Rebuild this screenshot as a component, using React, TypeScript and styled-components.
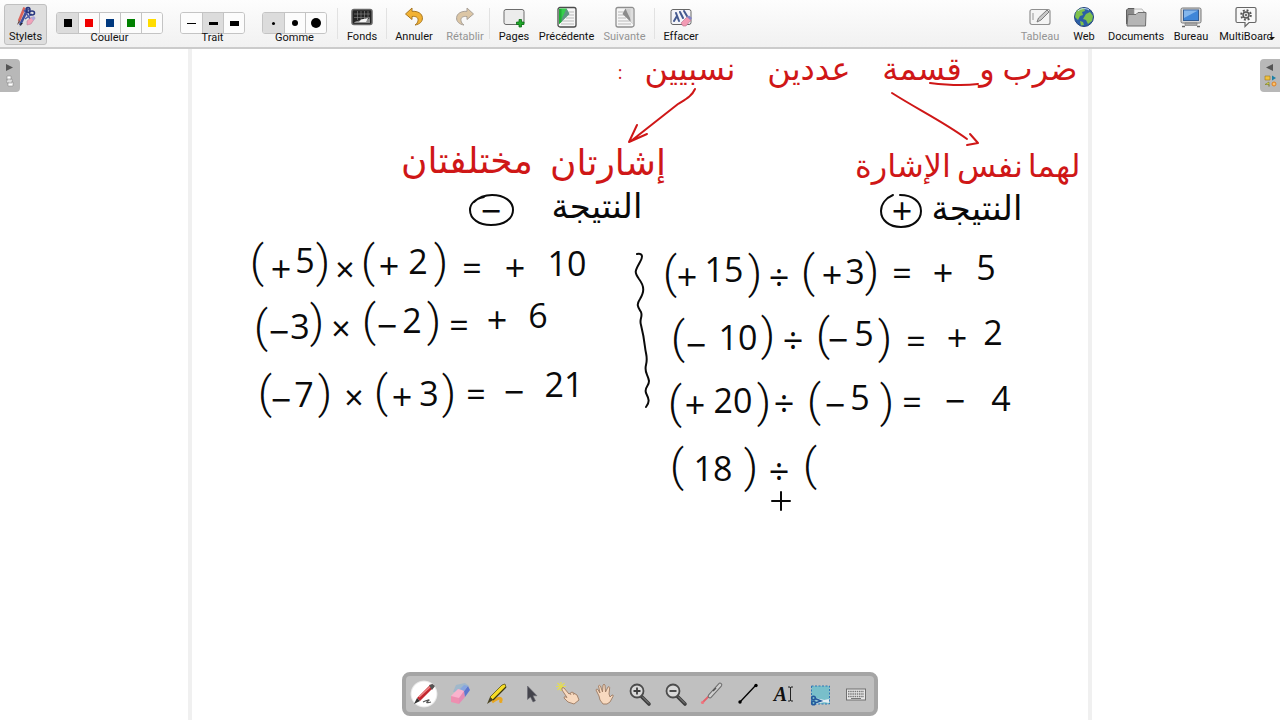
import React from "react";
import styled, { createGlobalStyle, css } from "styled-components";

const GlobalStyle = createGlobalStyle`
  *, *::before, *::after { box-sizing: border-box; }
  body {
    margin: 0;
    background: #fff;
    color: #111;
    font-family: Roboto, "Noto Sans", sans-serif;
    overflow: hidden;
  }
  button { font: inherit; color: inherit; }
`;

const Window = styled.div`
  display: flex;
  flex-direction: column;
  min-height: 100vh;
`;

/* ---------- top toolbar ---------- */

const Toolbar = styled.header`
  display: flex;
  align-items: stretch;
  height: 49px;
  padding: 4px 4px 2px;
  border-bottom: 2px solid #cbcbcb;
  background: linear-gradient(#fdfdfd, #f1f1f1);
  font-size: 11px;
  line-height: 14px;
`;

const Spacer = styled.div`
  flex: 1;
`;

const Divider = styled.span<{ $gap?: number }>`
  width: 1px;
  margin: 4px 0 6px ${(p) => p.$gap ?? 0}px;
  background: #e2e2e2;
`;

const ToolButton = styled.button<{ $width: number; $active?: boolean }>`
  position: relative;
  display: flex;
  flex-direction: column;
  align-items: center;
  gap: 2px;
  width: ${(p) => p.$width}px;
  height: 41px;
  padding: 1px 0 0;
  border: 1px solid transparent;
  border-radius: 3px;
  background: none;
  white-space: nowrap;
  ${(p) =>
    p.$active &&
    css`
      border-color: #c0c0c0;
      background: #dedede;
    `}
  &:disabled {
    color: #949494;
  }
  svg {
    display: block;
    flex: none;
  }
`;

const Group = styled.div`
  display: flex;
  flex-direction: column;
  align-items: center;
  margin-left: 9px;
  padding-top: 8px;
  & + & {
    margin-left: 17px;
  }
`;

const GroupLabel = styled.span`
  line-height: 8px;
`;

const Segments = styled.div`
  display: flex;
  border: 1px solid #c4c4c4;
  border-radius: 3px;
  overflow: hidden;
`;

const Segment = styled.button<{ $active?: boolean }>`
  display: grid;
  place-items: center;
  width: 21px;
  height: 20px;
  padding: 0;
  border: 0;
  background: ${(p) => (p.$active ? "#dcdcdc" : "#fcfcfc")};
  & + & {
    border-left: 1px solid #c4c4c4;
  }
`;

const Swatch = styled.i<{ $w: number; $h: number; $color?: string; $round?: boolean }>`
  width: ${(p) => p.$w}px;
  height: ${(p) => p.$h}px;
  background: ${(p) => p.$color ?? "#000"};
  border-radius: ${(p) => (p.$round ? "50%" : "0")};
`;

const Caret = styled.span`
  position: absolute;
  right: 0;
  bottom: 4px;
  border: 3px solid transparent;
  border-top-color: #111;
  border-bottom: 0;
`;

/* ---------- board ---------- */

const Board = styled.main`
  position: relative;
  display: flex;
  flex: 1;
  justify-content: center;
`;

const Sheet = styled.section`
  position: relative;
  width: 100%;
  max-width: 904px;
  border: solid #f0f0f0;
  border-width: 0 4px;
`;

const Drawing = styled.svg`
  position: absolute;
  inset: 0;
  width: 100%;
  height: 100%;
  fill: none;
  stroke: #0a0a0a;
  stroke-width: 2;
  stroke-linecap: round;
  stroke-linejoin: round;
`;

const Line = styled.p`
  margin: 0;
`;

const Ink = styled.span<{ $x: number; $y: number; $size: number; $paren?: boolean; $color?: string }>`
  position: absolute;
  left: ${(p) => p.$x}px;
  top: ${(p) => p.$y}px;
  transform: translate(-50%, -50%);
  font-family: ${(p) => (p.$paren ? "Roboto, sans-serif" : '"Open Sans", "DejaVu Sans", sans-serif')};
  font-size: ${(p) => p.$size}px;
  font-weight: ${(p) => (p.$paren ? 300 : 400)};
  line-height: 1;
  white-space: nowrap;
  color: ${(p) => p.$color ?? "#0a0a0a"};
`;

const SideTab = styled.button<{ $side: "left" | "right" }>`
  position: absolute;
  top: 10px;
  ${(p) => p.$side}: 0;
  display: grid;
  place-items: center;
  width: 20px;
  height: 33px;
  padding: 0;
  border: 0;
  border-radius: ${(p) => (p.$side === "left" ? "0 4px 4px 0" : "4px 0 0 4px")};
  background: #b8b8b8;
`;

/* ---------- floating palette ---------- */

const Palette = styled.nav`
  position: fixed;
  bottom: 4px;
  left: 50%;
  transform: translateX(-50%);
  display: flex;
  align-items: center;
  padding: 4px 0;
  border: 4px solid #a5a5a5;
  border-radius: 8px;
  background: #c0c0c0;
`;

const PaletteButton = styled.button<{ $active?: boolean }>`
  display: grid;
  place-items: center;
  width: 28px;
  height: 28px;
  margin: 0 4px;
  padding: 0;
  border: 0;
  border-radius: 50%;
  background: ${(p) => (p.$active ? "radial-gradient(circle, #fff 0 60%, #e4e4e4 66%, #c0c0c0 70%)" : "none")};
`;

const Icon = ({ w = 22, h = 22, children }: { w?: number; h?: number; children: React.ReactNode }) => (
  <svg width={w} height={h} viewBox={`0 0 ${w} ${h}`} fill="none" aria-hidden="true">
    {children}
  </svg>
);

/* ---------- toolbar icons ---------- */

const PensIcon = () => (
  <Icon>
    <path d="M13 2.500 5 19" stroke="#3c4f9a" strokeWidth="2.600" />
    <path d="M9.500 1.500 4 15" stroke="#d9635a" strokeWidth="2.600" />
    <path d="m4 14-2 5 3-3z" fill="#5b3a3a" />
    <path d="m6 17-1.500 3.500L8 17z" fill="#222" />
    <path d="m9 4 7 10M17 8l-7 5" stroke="#4c5aa8" strokeWidth="1.500" />
    <ellipse cx="13" cy="4" rx="2" ry="2.500" stroke="#26347e" strokeWidth="1.500" />
    <ellipse cx="17" cy="7" rx="2.500" ry="2" stroke="#26347e" strokeWidth="1.500" />
    <path d="m12 15 5-4 3 1-4 6-4 1z" fill="#f1a3b9" stroke="#b7849c" strokeWidth=".6" />
    <path d="m16 12 3-2 1.500 2-2 2.500z" fill="#a9a6dc" />
  </Icon>
);
const BackgroundsIcon = () => (
  <Icon>
    <rect x="1" y="3.500" width="20" height="15" rx="2" fill="#232323" stroke="#686868" strokeWidth="1.500" />
    <path d="M3 8h16M3 11.500h16M6.500 5v9M10 5v9M13.500 5v9M17 5v9" stroke="#8a8a8a" strokeWidth=".6" />
    <path d="M3 17c1-2 5-2.500 8-2.500 4 0 6-1 8-2.500v5z" fill="#8f8f8f" />
    <path d="m10 13.500 7-1.500-2 4H8z" fill="#f4f4f4" />
  </Icon>
);
const arrowPath = "M9 2 2.500 8 9 13.500V10.500c4-.5 6.500 1 6 4-.2 2-1.500 3.500-3 4.500 5-.8 7.700-3.500 7.400-7.400C19 7.500 15 5 9 5.300z";
const UndoIcon = () => (
  <Icon>
    <path d={arrowPath} fill="#f2b233" stroke="#a87722" strokeWidth="1" strokeLinejoin="round" />
  </Icon>
);
const RedoIcon = () => (
  <Icon>
    <g transform="translate(22 0) scale(-1 1)">
      <path d={arrowPath} fill="#dcc6a5" stroke="#a9a198" strokeWidth="1" strokeLinejoin="round" />
    </g>
  </Icon>
);
const PagesIcon = () => (
  <Icon>
    <rect x="1" y="3.500" width="20" height="15" rx="2" fill="#ececec" stroke="#6c6c6c" />
    <path d="M16 13.500h2.500v2.500H21v2.500h-2.500V21H16v-2.500h-2.500V16H16z" fill="#21a82a" stroke="#0b6b14" strokeWidth=".8" />
  </Icon>
);
const PageTurnIcon = ({ muted }: { muted?: boolean }) => (
  <Icon>
    <g transform={muted ? "translate(22 0) scale(-1 1)" : undefined}>
      <rect x="2" y="1.500" width="18" height="19.500" rx="2" fill="#f6f6f6" stroke={muted ? "#8f8f8f" : "#4b4b4b"} strokeWidth="1.300" />
      <path d="M12 6h6M12 9h6M10 12h8M5 15h13M5 18h13" stroke="#b9b9b9" />
      <path d="M3 2.500h7.500L13 8 3 18z" fill={muted ? "#cfcfcf" : "#35cf4c"} />
      <path d="M10.500 2.500 13.500 8 3 18 8.500 7z" fill={muted ? "#8b8b8b" : "#5f9482"} />
      <path d="M3 3h2.500v13L3 18z" fill={muted ? "#dedede" : "#1fae36"} />
    </g>
  </Icon>
);
const EraseIcon = () => (
  <Icon>
    <rect x="1" y="3.500" width="20" height="15" rx="2" fill="#f4f4f8" stroke="#666" />
    <path d="m4 15 3-5M6 7l3 8M10 6l3 6M14 5l3 5" stroke="#44598f" strokeWidth="2" strokeLinecap="round" />
    <path d="m11 17 6-6 4 3-5 6h-3z" fill="#f29bb4" stroke="#b8718b" strokeWidth=".6" />
    <path d="m17 11 2-1.500 3 2.500-1.500 2z" fill="#8585c7" />
  </Icon>
);
const BoardIcon = () => (
  <Icon>
    <rect x="1" y="3.500" width="20" height="15" rx="2" fill="#f4f4f4" stroke="#909090" strokeWidth="1.200" />
    <path d="M4 7v7" stroke="#a5a5a5" strokeWidth="1.200" />
    <path d="m8 16 1.500-4L18 4l2 2-8 8z" fill="#c8c8c8" stroke="#7c7c7c" />
  </Icon>
);
const WebIcon = () => (
  <Icon>
    <circle cx="11" cy="11" r="9.500" fill="#2c5fa7" stroke="#24457d" />
    <path d="M3 6c2-3 5-4 8-4l1 3-3 1 1 3-3 1-2 4-3-3zM13 8l4-2 3 4-1 5-4 3-2-4-3-1zM7 15l3 1 1 3-3 .5z" fill="#7fc24b" />
    <path d="M5 5c3-3 8-3 11-1" stroke="#c0d8f4" strokeWidth="1" />
  </Icon>
);
const DocumentsIcon = () => (
  <Icon>
    <path d="M1.500 18V4L3 2.500h6l2 3h8V18z" fill="#8a8a8a" stroke="#5e5e5e" />
    <path d="M9 3h8l2 3v5H9z" fill="#f1f1f1" stroke="#999" strokeWidth=".6" />
    <path d="M2 20 3 8.500h8l2-2h8L20.500 20z" fill="#b5b5b5" stroke="#6e6e6e" />
  </Icon>
);
const DesktopIcon = () => (
  <Icon>
    <rect x="1" y="2" width="20" height="15" rx="1.500" fill="#d5d5d5" stroke="#777" />
    <rect x="3.500" y="4" width="15" height="10.500" fill="#3f86d8" stroke="#345d93" />
    <path d="M4 4.500h14L4 12z" fill="#83b6ec" />
    <path d="M5 17h12v2.500H5z" fill="#aaa" stroke="#777" strokeWidth=".6" />
    <path d="M2 20.500h3M17 20.500h3" stroke="#666" strokeWidth="1.500" />
  </Icon>
);
const MultiBoardIcon = () => (
  <Icon>
    <path d="M2.500 1.500h17q1.500 0 1.500 1.500v12q0 1.500-1.500 1.500h-5.500l-4 4v-4H2.500Q1 16.500 1 15V3q0-1.500 1.500-1.500z" fill="#f8f8f8" stroke="#666" strokeWidth="1.200" />
    <circle cx="11" cy="9" r="4.800" stroke="#555" strokeWidth="2" strokeDasharray="1.900 1.870" />
    <circle cx="11" cy="9" r="3" fill="#ddd" stroke="#555" strokeWidth="1.400" />
    <circle cx="11" cy="9" r="1" fill="#555" />
  </Icon>
);

/* ---------- palette icons ---------- */

const PenIcon = () => (
  <Icon w={26} h={26}>
    <path d="M12 21c4-2 8-3 5-1s0 2 3 1" stroke="#555" strokeWidth="1.200" />
    <path d="m6 17 3 3L23 6l-1.500-2.500L19 4z" fill="#c3272f" />
    <path d="M8 16 20 5" stroke="#ef8a8a" strokeWidth="1.400" />
    <path d="m18 4 3.500-1L24 5l-3 4z" fill="#555" />
    <path d="m6 17 3 3-6 3z" fill="#333" />
  </Icon>
);
const EraserIcon = () => (
  <Icon w={26} h={26}>
    <path d="m9 4 9-2 4 3-7 5-9 1z" fill="#7fb0d6" opacity=".5" />
    <path d="m4 15 7-7 8 2-7 10-8 1z" fill="#f9b3cd" />
    <path d="m4 15 8 2v6l-8-2z" fill="#ee8fb0" />
    <path d="m12 17 5-7 1 6-6 7z" fill="#e58bb4" />
    <path d="m17 10 4-5 2 4-5 7z" fill="#5c76cf" />
    <path d="m13 8 4-4 4 1-4 5z" fill="#86a5e0" />
  </Icon>
);
const MarkerIcon = () => (
  <Icon w={26} h={26}>
    <path d="M9 21c4-3 8-5 9-3s-2 3 1 2" stroke="#e9a721" strokeWidth="3" />
    <path d="m7 16 3 3L23 6l-1-3-3 1z" fill="#f6dc26" stroke="#5b5313" strokeWidth=".8" />
    <path d="m10 19 13-13" stroke="#3a3610" strokeWidth="1.300" />
    <path d="m7 16 3 3-6 4z" fill="#4b4422" />
  </Icon>
);
const PointerIcon = () => (
  <Icon w={26} h={26}>
    <path d="M8.500 5v13.500l3-2.500 2.500 5 2.500-1.200-2.500-5h4z" fill="#44444c" stroke="#6c6c74" strokeWidth=".6" />
  </Icon>
);
const TouchIcon = () => (
  <Icon w={26} h={26}>
    <path d="M6 1v9M1 5.500h10M2.500 2l7 7M9.500 2l-7 7" stroke="#e3dc55" strokeWidth="1.200" />
    <path d="M7 7q1-1 2 0l5 6 3-2 5 3 2 5-5 4-6-2-4-4q0-2 2-1l1 .5L7 9z" fill="#f7d9bf" stroke="#9c7b62" strokeWidth=".9" />
    <path d="m15 12 1 2M18 12l1 2" stroke="#9c7b62" strokeWidth=".8" />
  </Icon>
);
const HandIcon = () => (
  <Icon w={26} h={26}>
    <path d="M8 15 5 9q.3-1.500 1.800-.6L9 12 7.500 5q.8-1.800 2 0l2 6L12 4q1-1.500 2 0l.5 7L17 6q1.300-1 1.700.6L18 13l1 3 2-2q1.800-.5 1 1.500L19 21l-3 2h-4l-3-4z" fill="#f7d9bf" stroke="#9c7b62" strokeWidth=".9" strokeLinejoin="round" />
  </Icon>
);
const MagnifierIcon = ({ plus }: { plus?: boolean }) => (
  <Icon w={26} h={26}>
    <path d="m14 15 8 8" stroke="#3e3e3e" strokeWidth="3.600" strokeLinecap="round" />
    <path d="m15 15.500 7 7" stroke="#8d8d8d" strokeWidth="1" />
    <circle cx="10" cy="10" r="6.500" fill="#d9d9d9" stroke="#4c4c4c" strokeWidth="1.800" />
    <path d={plus ? "M6.500 10h7M10 6.500v7" : "M6.500 10h7"} stroke="#3e3e3e" strokeWidth="1.800" />
  </Icon>
);
const LaserIcon = () => (
  <Icon w={26} h={26}>
    <path d="M3 22 12 13" stroke="#e4606a" strokeWidth="1.800" />
    <circle cx="3.500" cy="21.500" r="1.600" fill="#ee7680" />
    <path d="m11 15 10-11" stroke="#6c6c6c" strokeWidth="4.600" strokeLinecap="round" />
    <path d="m11 15 10-11" stroke="#cfcfcf" strokeWidth="2.600" strokeLinecap="round" />
    <path d="m14 10 3-3" stroke="#555" strokeWidth="1.500" />
  </Icon>
);
const LineIcon = () => (
  <Icon w={26} h={26}>
    <path d="M5 21 21 4" stroke="#000" strokeWidth="1.300" />
    <circle cx="5" cy="21" r="1.700" fill="#000" />
    <circle cx="21" cy="4.500" r="1.700" fill="#000" />
  </Icon>
);
const CaptureIcon = () => (
  <Icon w={26} h={26}>
    <rect x="4.500" y="5" width="18" height="18" fill="#79bfca" stroke="#2f77b5" strokeDasharray="2 1.500" />
    <path d="m8 18 14 3M8 22l14-3" stroke="#e4edf4" strokeWidth="1.800" />
    <path d="m8 17.500 6 2.500-6 2" stroke="#24599c" strokeWidth="1.600" />
    <circle cx="6.500" cy="17" r="1.800" stroke="#24599c" strokeWidth="1.600" />
    <circle cx="6.500" cy="22" r="1.800" stroke="#24599c" strokeWidth="1.600" />
  </Icon>
);
const KeyboardIcon = () => (
  <Icon w={26} h={26}>
    <rect x="3.500" y="8" width="19" height="11" fill="#e8e8e8" stroke="#707070" />
    <path d="M5 10.500h16M5 13h16M5 15.500h16" stroke="#777" strokeWidth="1.400" strokeDasharray="1.500 .7" />
    <path d="M8 17.500h10" stroke="#777" />
  </Icon>
);

const TextTool = styled.span`
  display: flex;
  align-items: center;
  font-family: "Liberation Serif", serif;
  font-size: 20px;
  font-weight: 700;
  font-style: italic;
  line-height: 20px;
`;
const TextToolIcon = () => (
  <TextTool>
    A
    <Icon w={7} h={20}>
      <path d="M1 3h2l.5 1 .5-1h2M1 17h2l.5-1 .5 1h2M3.500 4v12" stroke="#222" />
    </Icon>
  </TextTool>
);

/* ---------- handwriting ---------- */

/* Ink is stored in window coordinates; the sheet starts at this point. */
const ORIGIN = { x: 192, y: 49 };
const RED = "#cf1717";

type Mark = [text: string, x: number, y: number];

const multiplications: Mark[][] = [
  [["(", 257, 262], ["+", 281, 269], ["5", 305, 260], [")", 323, 262], ["×", 345, 269], ["(", 368, 262], ["+", 389, 266], ["2", 418, 261], [")", 441, 262], ["=", 472, 268], ["+", 515, 268], ["10", 567, 263]],
  [["(", 261, 327], ["−", 279, 332], ["3", 300, 326], [")", 317, 322], ["×", 341, 328], ["(", 369, 321], ["−", 387, 326], ["2", 412, 320], [")", 434, 321], ["=", 459, 325], ["+", 497, 320], ["6", 538, 315]],
  [["(", 265, 393], ["−", 281, 400], ["7", 304, 394], [")", 325, 393], ["×", 354, 397], ["(", 381, 392], ["+", 402, 397], ["3", 429, 393], [")", 449, 393], ["=", 476, 394], ["−", 514, 392], ["21", 564, 384]],
];

const divisions: Mark[][] = [
  [["(", 670, 273], ["+", 687, 277], ["15", 724, 269], [")", 755, 273], ["÷", 779, 278], ["(", 808, 272], ["+", 832, 275], ["3", 855, 271], [")", 872, 271], ["=", 902, 273], ["+", 943, 273], ["5", 986, 267]],
  [["(", 678, 338], ["−", 696, 345], ["10", 738, 337], [")", 768, 335], ["÷", 793, 341], ["(", 823, 335], ["−", 838, 340], ["5", 864, 333], [")", 885, 338], ["=", 916, 341], ["+", 957, 338], ["2", 993, 332]],
  [["(", 675, 403], ["+", 695, 405], ["20", 733, 400], [")", 764, 402], ["÷", 784, 404], ["(", 814, 401], ["−", 835, 405], ["5", 860, 397], [")", 887, 402], ["=", 912, 402], ["−", 955, 401], ["4", 1001, 398]],
  [["(", 677, 466], ["18", 713, 468], [")", 751, 467], ["÷", 779, 472], ["(", 810, 465]],
];

const title: Mark[][] = [
  [["ضرب", 1040, 68], ["و", 987, 68], ["قسمة", 922, 68], ["عددين", 809, 68], ["نسبيين", 690, 68], [":", 620, 72]],
];
const sameSign: Mark[][] = [[["لهما", 1054, 165], ["نفس", 990, 165], ["الإشارة", 903, 165]]];
const differentSigns: Mark[][] = [[["إشارتان", 608, 162], ["مختلفتان", 467, 160]]];

const results: Mark[][] = [
  [["النتيجة", 977, 207], ["+", 902, 211]],
  [["النتيجة", 597, 205], ["−", 491, 211]],
];

const isParen = (text: string) => /[()]/.test(text);

const sizeOf = (text: string, arabicSize: number) => {
  if (isParen(text)) return 44;
  if (/[\u0600-\u06ff]/.test(text)) return arabicSize;
  if (/[+−÷]/.test(text)) return 36;
  if (text === ":") return 18;
  return 34;
};

const Handwriting = ({ lines, color, size = 34 }: { lines: Mark[][]; color?: string; size?: number }) => (
  <>
    {lines.map((line, row) => (
      <Line key={row}>
        {line.map(([text, x, y], i) => (
          <Ink key={i} $x={x - ORIGIN.x} $y={y - ORIGIN.y} $size={sizeOf(text, size)} $paren={isParen(text)} $color={color}>
            {text}
          </Ink>
        ))}
      </Line>
    ))}
  </>
);

const colours = ["#000", "#f00000", "#00397f", "#008000", "#ffdc00"];
const colourNames = ["Noir", "Rouge", "Bleu", "Vert", "Jaune"];

const tools: [string, React.ReactNode][] = [
  ["Stylo", <PenIcon />],
  ["Gomme", <EraserIcon />],
  ["Surligneur", <MarkerIcon />],
  ["Sélection", <PointerIcon />],
  ["Interagir", <TouchIcon />],
  ["Déplacer", <HandIcon />],
  ["Zoom avant", <MagnifierIcon plus />],
  ["Zoom arrière", <MagnifierIcon />],
  ["Pointeur laser", <LaserIcon />],
  ["Ligne", <LineIcon />],
  ["Texte", <TextToolIcon />],
  ["Capture", <CaptureIcon />],
  ["Clavier", <KeyboardIcon />],
];

export default function App() {
  return (
    <Window>
      <GlobalStyle />
      <Toolbar>
        <ToolButton $width={43} $active aria-pressed="true"><PensIcon />Stylets</ToolButton>
        <Group>
          <Segments>
            {colours.map((c, i) => (
              <Segment key={c} $active={i === 0} aria-label={colourNames[i]}><Swatch $w={8} $h={8} $color={c} /></Segment>
            ))}
          </Segments>
          <GroupLabel>Couleur</GroupLabel>
        </Group>
        <Group>
          <Segments>
            {[1, 3, 5].map((h, i) => (
              <Segment key={h} $active={i === 1} aria-label={`Trait ${h}`}><Swatch $w={9} $h={h} /></Segment>
            ))}
          </Segments>
          <GroupLabel>Trait</GroupLabel>
        </Group>
        <Group>
          <Segments>
            {[3, 6, 10].map((d, i) => (
              <Segment key={d} $active={i === 0} aria-label={`Gomme ${d}`}><Swatch $w={d} $h={d} $round /></Segment>
            ))}
          </Segments>
          <GroupLabel>Gomme</GroupLabel>
        </Group>
        <Divider $gap={10} />
        <ToolButton $width={48}><BackgroundsIcon />Fonds</ToolButton>
        <Divider />
        <ToolButton $width={54}><UndoIcon />Annuler</ToolButton>
        <ToolButton $width={48} disabled><RedoIcon />Rétablir</ToolButton>
        <Divider />
        <ToolButton $width={48}><PagesIcon />Pages</ToolButton>
        <ToolButton $width={57}><PageTurnIcon />Précédente</ToolButton>
        <ToolButton $width={59} disabled><PageTurnIcon muted />Suivante</ToolButton>
        <Divider />
        <ToolButton $width={52}><EraseIcon />Effacer</ToolButton>
        <Spacer />
        <ToolButton $width={44} disabled><BoardIcon />Tableau</ToolButton>
        <ToolButton $width={44}><WebIcon />Web</ToolButton>
        <ToolButton $width={60}><DocumentsIcon />Documents</ToolButton>
        <ToolButton $width={50}><DesktopIcon />Bureau</ToolButton>
        <ToolButton $width={60}><MultiBoardIcon />MultiBoard<Caret /></ToolButton>
      </Toolbar>

      <Board>
        <Sheet>
          <Drawing aria-hidden="true">
            <g transform={`translate(${-ORIGIN.x} ${-ORIGIN.y})`}>
              <g stroke={RED}>
                <path d="M695 89c-3 7-9 10-17 15l-47 37M637 125l-8 17 18-8" />
                <path d="M892 93c25 16 52 29 75 46M970 134l8 9-11 2" />
                <path d="M930 83c16 2 34 3 48 1" />
              </g>
              <path d="M484 197c-9 2-14 7-14 13 0 9 9 15 21 15 13 0 22-6 22-15s-9-15-21-15c-8 0-14 3-18 7" />
              <path d="M893 195c-7 3-12 9-12 16 0 9 8 16 20 16s20-7 20-16-8-16-21-16" />
              <path d="M637 254c6-1 6 3 3 8-5 9-6 10-1 17 6 8 5 13 1 20-4 6-2 8 1 13 2 5-2 7 0 13 2 8 3 13 4 22s3 10 1 18 2 9 3 16c0 6-5 6-3 12 3 6 4 9 0 14" />
              <path d="M772 501h18M781 492v18" />
            </g>
          </Drawing>
          <div lang="ar" dir="rtl">
            <Handwriting lines={title} color={RED} size={32} />
            <Handwriting lines={sameSign} color={RED} size={32} />
            <Handwriting lines={differentSigns} color={RED} size={36} />
            <Handwriting lines={results} />
          </div>
          <Handwriting lines={multiplications} />
          <Handwriting lines={divisions} />
        </Sheet>
        <SideTab $side="left" aria-label="Afficher les pages">
          <Icon w={20} h={33}>
            <path d="m6 5 7 3.500L6 12z" fill="#555" />
            <path d="M7 17h4v4H7zM7 20h5v4H7zM8 23h5v4H8z" fill="#fff" stroke="#8b8b8b" strokeWidth=".6" />
          </Icon>
        </SideTab>
        <SideTab $side="right" aria-label="Afficher la bibliothèque">
          <Icon w={20} h={33}>
            <path d="m13 5-7 3.500 7 3.500z" fill="#555" />
            <path d="M5 17h5v4H5z" fill="#f0c040" stroke="#9a7718" strokeWidth=".6" />
            <path d="m12 16.500 4 2.500-4 2.500z" fill="#1d7fa5" />
            <path d="m9 23-4 2.500h4v2z" fill="#e4e04c" stroke="#7b7b22" strokeWidth=".6" />
            <circle cx="14" cy="25" r="2" fill="#f8c070" stroke="#e08020" />
          </Icon>
        </SideTab>
      </Board>

      <Palette aria-label="Outils">
        {tools.map(([name, icon], i) => (
          <PaletteButton key={name} $active={i === 0} aria-label={name}>{icon}</PaletteButton>
        ))}
      </Palette>
    </Window>
  );
}
